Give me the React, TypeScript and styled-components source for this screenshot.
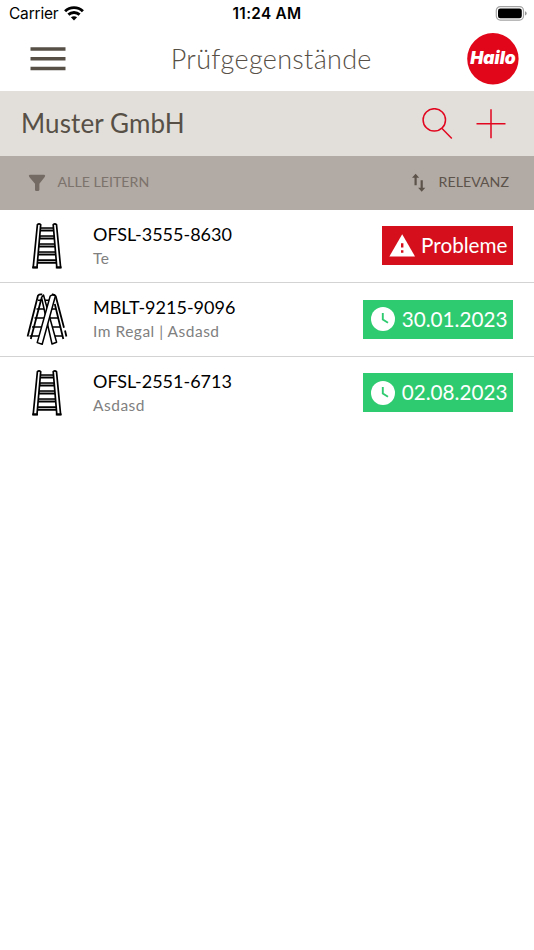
import React from "react";
import styled, { createGlobalStyle } from "styled-components";

const GlobalStyle = createGlobalStyle`
  body { margin: 0; background: #fff; }
  * { box-sizing: border-box; }
  svg { display: block; flex: none; }
`;

const Screen = styled.div`
  width: 534px;
  height: 950px;
  overflow: hidden;
  background: #fff;
  font-family: Lato, sans-serif;
  display: flex;
  flex-direction: column;
`;

const StatusBar = styled.div`
  height: 27px;
  flex: none;
  display: grid;
  grid-template-columns: 1fr auto 1fr;
  align-items: center;
  padding: 0 7px 0 9px;
  color: #000;
  font: 400 15.5px/27px Inter, sans-serif;
`;

const Carrier = styled.div`
  display: flex;
  align-items: center;
  gap: 6px;
  letter-spacing: -0.2px;
`;

const Clock = styled.div`
  font-weight: 600;
  font-size: 15.3px;
  letter-spacing: 0.3px;
  margin-right: 2px;
`;

const Battery = styled.div`
  justify-self: end;
`;

const Header = styled.header`
  height: 64px;
  flex: none;
  display: grid;
  grid-template-columns: 36px 1fr 52px;
  align-items: center;
  padding: 0 15.5px 0 30px;
`;

const Title = styled.h1`
  margin: 0;
  padding-left: 10px;
  text-align: center;
  color: #575047;
  font-size: 27px;
  font-weight: 300;
  line-height: 64px;
  letter-spacing: 0.3px;
`;

const CompanyBar = styled.div`
  height: 65px;
  flex: none;
  display: flex;
  align-items: center;
  gap: 23px;
  padding: 0 28px 0 21px;
  background: #e2dfda;
`;

const Company = styled.h2`
  flex: 1;
  margin: 0;
  color: #575047;
  font-size: 26px;
  font-weight: 400;
  line-height: 65px;
  letter-spacing: 0.12px;
`;

const FilterBar = styled.div`
  height: 53.5px;
  flex: none;
  display: flex;
  align-items: center;
  justify-content: space-between;
  padding: 0 25px 0 28px;
  background: #b2aaa4;
`;

const FilterButton = styled.div<{ $color: string; $gap: number }>`
  display: flex;
  align-items: center;
  gap: ${(p) => p.$gap}px;
  color: ${(p) => p.$color};
  font-size: 14.2px;
  line-height: 20px;
`;

const FilterLabel = styled.span`
  padding-bottom: 1.5px;
`;

const Row = styled.div`
  height: 73.5px;
  flex: none;
  display: flex;
  align-items: center;
  padding: 0 21px 0 22px;
  border-bottom: 1.5px solid #d3d3d3;
  &:last-child {
    border-color: transparent;
  }
`;

const Thumb = styled.div`
  width: 50px;
  height: 56px;
  margin-right: 21px;
`;

const Info = styled.div`
  flex: 1;
  display: flex;
  flex-direction: column;
  padding-top: 0.4px;
`;

const Code = styled.div`
  color: #000;
  font-size: 18px;
  line-height: 25px;
`;

const Place = styled.div`
  color: #808080;
  font-size: 15.5px;
  line-height: 23px;
  letter-spacing: 0.5px;
`;

const Badge = styled.div<{ $problem?: boolean }>`
  height: 39px;
  width: ${(p) => (p.$problem ? 131 : 150)}px;
  display: flex;
  align-items: center;
  justify-content: space-between;
  padding: 0 5.5px 0 ${(p) => (p.$problem ? 6.5 : 8)}px;
  background: ${(p) => (p.$problem ? "#d50f1c" : "#2fcb71")};
  color: #fff;
  font-size: 20.7px;
  line-height: 39px;
`;

const WifiIcon = () => (
  <svg width="20" height="15" viewBox="0 0 20 15">
    <g fill="none" stroke="#000" strokeWidth="2.9">
      <path d="M1.1 5.2C6 .4 14 .4 18.9 5.2" />
      <path d="M4.4 8.6C7.5 5.7 12.5 5.7 15.6 8.6" />
    </g>
    <path d="M6.9 11.3C8.6 9.8 11.4 9.8 13.1 11.3L10 14.5Z" />
  </svg>
);

const BatteryIcon = () => (
  <svg width="32" height="16" viewBox="0 0 32 16">
    <rect x="1.3" y="0.6" width="27.2" height="13.5" rx="4" fill="none" stroke="#a3a3a3" strokeWidth="1.2" />
    <rect x="3" y="2.4" width="23.8" height="9.9" rx="2.3" />
    <path d="M30 5.3Q31.7 5.9 31.7 7.4T30 9.6Z" fill="#999" />
  </svg>
);

const MenuIcon = () => (
  <svg width="36" height="26" viewBox="0 0 36 26">
    <path d="M.5 3H35.5M.5 12.8H35.5M.5 22.5H35.5" stroke="#575047" strokeWidth="3.6" />
  </svg>
);

const Logo = () => (
  <svg width="52" height="52" viewBox="0 0 52 52">
    <circle cx="25.9" cy="25.8" r="25.7" fill="#e2061a" />
    <text x="3.2" y="31" textLength="45.5" lengthAdjust="spacingAndGlyphs" fill="#fff" fontFamily="Inter, sans-serif" fontWeight="900" fontStyle="italic" fontSize="17.8">Hailo</text>
  </svg>
);

const SearchIcon = () => (
  <svg width="31" height="32" viewBox="0 0 31 32" fill="none" stroke="#e2061f" strokeWidth="1.5">
    <circle cx="12.3" cy="11.9" r="11.2" />
    <path d="M19.8 20.3L29.8 30.6" />
  </svg>
);

const PlusIcon = () => (
  <svg width="30" height="30" viewBox="0 0 30 30" stroke="#e2061f" strokeWidth="1.5">
    <path d="M.5 14.8H29.5M15 .3V29.3" />
  </svg>
);

const FunnelIcon = () => (
  <svg width="18" height="18" viewBox="0 0 18 18" fill="#746b64">
    <path d="M1.8.8H16.2Q17.9 1.2 16.7 3L11.4 9.8V15.7Q11.3 17 10 17H8.3Q7 17 7 15.7V9.8L1.3 3Q.1 1.2 1.8.8Z" />
  </svg>
);

const SortIcon = () => (
  <svg width="14" height="20" viewBox="0 0 14 20" fill="none" stroke="#5c534b" strokeWidth="2.2">
    <path d="M3.6 12.2V3M9.7 7.2V16" />
    <path d="M0 4.7L3.6 .7L7.2 4.7ZM6.1 14.7L9.7 18.7L13.3 14.7Z" fill="#5c534b" stroke="none" />
  </svg>
);

const WarningIcon = () => (
  <svg width="27" height="24" viewBox="0 0 27 24">
    <path d="M13.2.2L26 22.4H.4Z" fill="#fff" />
    <path d="M13.2 9.3V13.6M13.2 16.3V18.8" stroke="#d50f1c" strokeWidth="2.4" />
  </svg>
);

const ClockIcon = () => (
  <svg width="24" height="24" viewBox="0 0 24 24">
    <circle cx="12" cy="12" r="12" fill="#fff" />
    <path d="M11.8 6V12.5L17 15.8" fill="none" stroke="#2fcb71" strokeWidth="1.9" />
  </svg>
);

const LadderIcon = () => (
  <svg width="50" height="56" viewBox="0 0 50 56" fill="#fff" stroke="#000" strokeWidth="1.7" strokeLinejoin="round">
    <path fill="#b8b8b8" d="M18 10H32V12.6H18ZM17.5 18H32.5V20.6H17.5ZM16.5 26H33.5V28.6H16.5ZM16 34H34.5V36.6H16ZM15 42.2H35V44.8H15Z" />
    <path d="M15.4 6.6Q17 5.2 18.7 6.6L15 49.3H11.2ZM31.2 6.6Q32.9 5.2 34.5 6.6L38.6 49.3H34.8Z" />
    <path d="M10.2 49.6H16M33.8 49.6H39.6" strokeWidth="2" />
  </svg>
);

const DoubleLadderIcon = () => (
  <svg width="50" height="56" viewBox="0 0 50 56" fill="none" stroke="#000" strokeWidth="1.5" strokeLinejoin="round">
    <path d="M16 9.3H30M14.5 18H34M12.5 27H36M10 36H38M7.5 45H20M29.5 45H41" />
    <path strokeWidth="1.8" d="M5.6 45.5L16 4.5Q17.4 3 20.2 3.5M8.8 48L19.4 7.5M30 3.4Q32.8 3 33.8 5.4L42 36.8M43 39.5L44.4 45.5M32.8 13L41.3 48" />
    <path d="M19.5 6.5L21.5 4L34.6 51.3L30 53Z" fill="#fff" />
    <path d="M28.2 5Q30.8 3.2 33.4 5L20.2 53.2L15.2 51.6Z" fill="#fff" />
  </svg>
);

interface Item {
  code: string;
  place: string;
  status: string;
  problem?: boolean;
  double?: boolean;
}

const items: Item[] = [
  { code: "OFSL-3555-8630", place: "Te", status: "Probleme", problem: true },
  { code: "MBLT-9215-9096", place: "Im Regal | Asdasd", status: "30.01.2023", double: true },
  { code: "OFSL-2551-6713", place: "Asdasd", status: "02.08.2023" },
];

export default function App() {
  return (
    <Screen>
      <GlobalStyle />
      <StatusBar>
        <Carrier>Carrier <WifiIcon /></Carrier>
        <Clock>11:24 AM</Clock>
        <Battery><BatteryIcon /></Battery>
      </StatusBar>
      <Header>
        <MenuIcon />
        <Title>Prüfgegenstände</Title>
        <Logo />
      </Header>
      <CompanyBar>
        <Company>Muster GmbH</Company>
        <SearchIcon />
        <PlusIcon />
      </CompanyBar>
      <FilterBar>
        <FilterButton $color="#7c736c" $gap={11.5}>
          <FunnelIcon />
          <FilterLabel>ALLE LEITERN</FilterLabel>
        </FilterButton>
        <FilterButton $color="#5c534b" $gap={13}>
          <SortIcon />
          <FilterLabel>RELEVANZ</FilterLabel>
        </FilterButton>
      </FilterBar>
      <main>
        {items.map((item) => (
          <Row key={item.code}>
            <Thumb>{item.double ? <DoubleLadderIcon /> : <LadderIcon />}</Thumb>
            <Info>
              <Code>{item.code}</Code>
              <Place>{item.place}</Place>
            </Info>
            <Badge $problem={item.problem}>
              {item.problem ? <WarningIcon /> : <ClockIcon />}
              {item.status}
            </Badge>
          </Row>
        ))}
      </main>
    </Screen>
  );
}
